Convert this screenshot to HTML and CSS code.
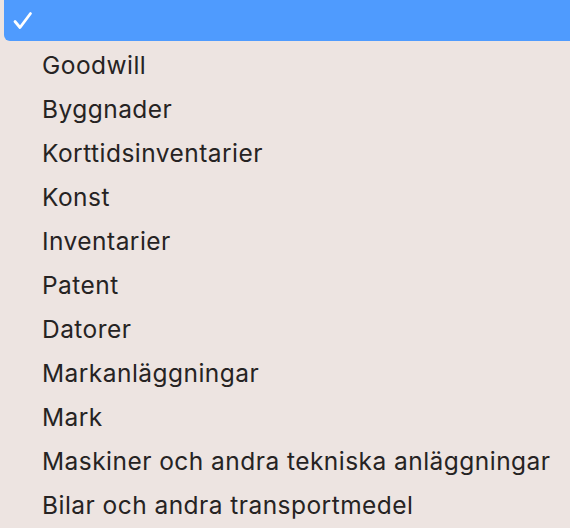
FILE: index.html
```html
<!DOCTYPE html>
<html lang="sv">
<head>
    <meta charset="UTF-8">
    <title>Tillgångstyp</title>
    <link rel="stylesheet" href="styles.css">
</head>
<body>

    <ul class="menu">
        <li class="item selected">
            <svg class="check" width="20" height="20" viewBox="0 0 20 20">
                <path d="M2 10.5 L7 16.5 L17.5 2.5" fill="none" stroke="#fff" stroke-width="2.8" stroke-linecap="round" stroke-linejoin="round"/>
            </svg>
        </li>
        <li class="item">Goodwill</li>
        <li class="item">Byggnader</li>
        <li class="item">Korttidsinventarier</li>
        <li class="item">Konst</li>
        <li class="item">Inventarier</li>
        <li class="item">Patent</li>
        <li class="item">Datorer</li>
        <li class="item">Markanläggningar</li>
        <li class="item">Mark</li>
        <li class="item">Maskiner och andra tekniska anläggningar</li>
        <li class="item">Bilar och andra transportmedel</li>
    </ul>

</body>
</html>
```

FILE: styles.css
```css
body {
    margin: 0;
    padding: 0;
    background: #ede4e1;
    font-family: Inter, 'Noto Sans', sans-serif;
    color: #262323;
    overflow: hidden;
}

.menu {
    list-style: none;
    margin: 0;
    padding: 0 0 0 4px;
}

.item {
    height: 44px;
    line-height: 44px;
    padding-left: 38px;
    font-size: 24.5px;
    letter-spacing: 0.46px;
    white-space: nowrap;
}

.selected {
    height: 41px;
    margin-bottom: 2px;
    margin-right: -10px;
    padding-left: 0;
    background: #4f9bfe;
    border-radius: 0 0 0 6px;
    display: flex;
    align-items: center;
}

.check {
    margin-left: 9px;
    margin-top: 1px;
}
```
